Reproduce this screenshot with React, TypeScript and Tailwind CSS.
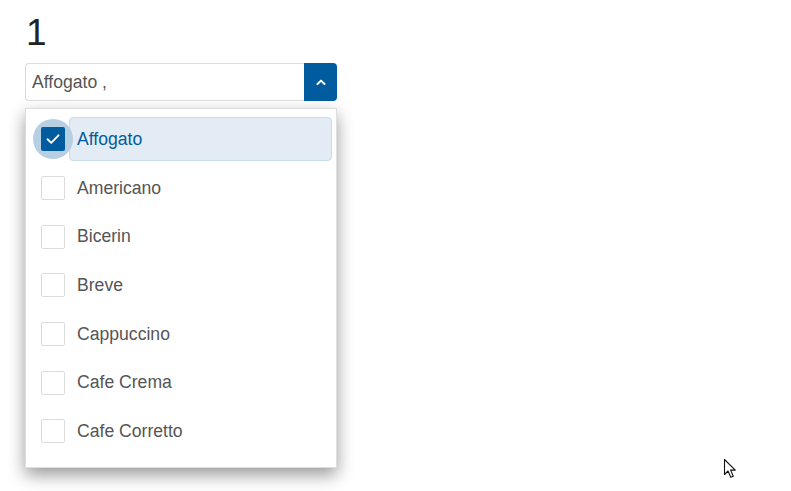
const items = [
  "Affogato",
  "Americano",
  "Bicerin",
  "Breve",
  "Cappuccino",
  "Cafe Crema",
  "Cafe Corretto",
];

const CheckIcon = () => (
  <svg width="16" height="16" viewBox="0 0 16 16" fill="none">
    <path d="M2.5 8.3 L6.2 11.8 L13.5 4.3" stroke="white" strokeWidth="1.9" strokeLinecap="round" strokeLinejoin="round" />
  </svg>
);

const ChevronUp = () => (
  <svg width="10" height="6" viewBox="0 0 10 6" fill="none">
    <path d="M1.5 5 L5 1.6 L8.5 5" stroke="white" strokeWidth="2" strokeLinecap="round" strokeLinejoin="round" />
  </svg>
);

const Cursor = () => (
  <svg width="14" height="21" viewBox="0 0 14 21" className="absolute left-[723px] top-[458px]">
    <path
      d="M1.5 1.5 L1.5 16.5 L5 13 L7.8 19.3 L10.3 18.2 L7.6 12.1 L12.3 12.1 Z"
      fill="white"
      stroke="#111"
      strokeWidth="1.1"
      strokeLinejoin="round"
    />
  </svg>
);

export default function App() {
  return (
    <div
      className="relative w-[791px] h-[491px] bg-white overflow-hidden"
      style={{ fontFamily: '"Liberation Sans", Arial, sans-serif' }}
    >
      <div className="pl-[25px] pt-[14px] w-[337px]">
        <div className="text-[37px] leading-none text-[#222] pl-[1px]">1</div>

        <div className="mt-[12px] flex h-[38px] w-[312px]">
          <div className="flex-1 flex items-center border border-r-0 border-[#dcdcdc] rounded-l-[4px] pl-[6px] text-[17.6px] text-[#555]">
            Affogato ,
          </div>
          <button className="w-[33px] h-full bg-[#005c9e] rounded-r-[4px] flex items-center justify-center">
            <ChevronUp />
          </button>
        </div>

        <div className="mt-[7px] w-[312px] bg-white border border-[#dedede] shadow-[0_7px_16px_rgba(0,0,0,0.4)] pt-[6px] pb-[11px]">
          {items.map((name, i) => {
            const checked = i === 0;
            return (
              <div key={name} className="h-[48.67px] flex items-center pl-[15px] pr-[4px]">
                <div className="relative w-[24px] h-[24px] shrink-0">
                  {checked && (
                    <div className="absolute -left-[8px] -top-[8px] w-[40px] h-[40px] rounded-full bg-[#b7cfe2]" />
                  )}
                  <div
                    className={
                      checked
                        ? "relative w-[24px] h-[24px] rounded-[2px] bg-[#005c9e] flex items-center justify-center"
                        : "relative w-[24px] h-[24px] rounded-[2px] border border-[#dcdcdc] bg-white"
                    }
                  >
                    {checked && <CheckIcon />}
                  </div>
                </div>
                <div
                  className={
                    checked
                      ? "ml-[4px] flex-1 h-[44px] flex items-center pl-[7px] rounded-[4px] bg-[#e3ecf5] border border-[#cadcec] text-[17.6px] text-[#005c9e]"
                      : "ml-[4px] flex-1 h-[44px] flex items-center pl-[8px] text-[17.6px] text-[#555]"
                  }
                >
                  {name}
                </div>
              </div>
            );
          })}
        </div>
      </div>
      <Cursor />
    </div>
  );
}
